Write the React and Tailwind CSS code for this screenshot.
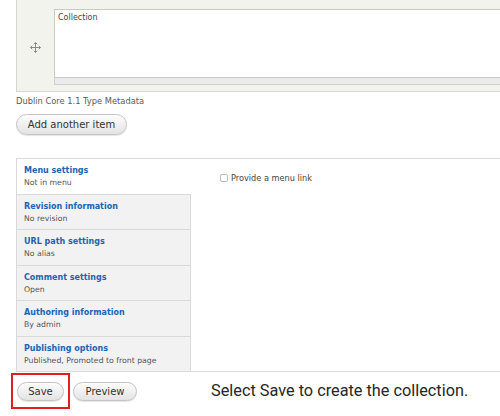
import React from "react";

const tabs = [
  ["Menu settings", "Not in menu"],
  ["Revision information", "No revision"],
  ["URL path settings", "No alias"],
  ["Comment settings", "Open"],
  ["Authoring information", "By admin"],
  ["Publishing options", "Published, Promoted to front page"],
];

function DragIcon() {
  return (
    <svg width="11" height="11" viewBox="0 0 11 11" fill="none" stroke="#8a8a8a" strokeWidth="1">
      <path d="M5.5 0.5v10M0.5 5.5h10" />
      <path d="M3.8 2.2L5.5 0.5L7.2 2.2M3.8 8.8L5.5 10.5L7.2 8.8M2.2 3.8L0.5 5.5L2.2 7.2M8.8 3.8L10.5 5.5L8.8 7.2" />
    </svg>
  );
}

export default function App() {
  return (
    <div
      className="relative w-[500px] h-[416px] overflow-hidden bg-white"
      style={{ fontFamily: '"DejaVu Sans", Verdana, sans-serif' }}
    >
      {/* multi-value table */}
      <div className="ml-4 w-[520px] h-[92px] flex border-l border-b border-[#d6d6d0] bg-[#f3f3ee]">
        <div className="w-[37px] flex items-center justify-center pt-[4px]">
          <DragIcon />
        </div>
        <div className="flex-1 pt-[9px]">
          <div className="h-[69px] bg-white border border-[#c8c8c8] px-[3px] pt-[2px] text-[8px] leading-[11px] text-[#444]">
            Collection
          </div>
          <div className="h-[7px] bg-[#ebebeb] border-x border-b border-[#cfcfcf]" />
        </div>
      </div>

      <div className="ml-4 mt-[3px] text-[8.3px] leading-[12px] text-[#595959]">
        Dublin Core 1.1 Type Metadata
      </div>

      <div className="ml-4 mt-[7px] flex">
        <div className="w-[111px] h-[21px] rounded-full border border-[#c4c4c4] bg-gradient-to-b from-[#fdfdfd] to-[#e3e3e3] shadow-[0_1px_1px_rgba(0,0,0,0.1)] flex items-center justify-center text-[10px] text-[#333]">
          Add another item
        </div>
      </div>

      {/* vertical tabs */}
      <div className="ml-4 mt-[23px] w-[520px] h-[214px] flex border-t border-l border-b border-[#d9d9d9]">
        <div className="w-[174px] flex flex-col">
          {tabs.map(([t, s], i) => (
            <div
              key={t}
              className={
                i === 0
                  ? "h-[35px] bg-white pl-[7px] pt-[6px]"
                  : "h-[35.6px] bg-[#f2f2f2] border-t border-r border-[#d9d9d9] pl-[7px] pt-[6px]"
              }
            >
              <div className="text-[8px] leading-[12px] font-bold text-[#1a64b4]">{t}</div>
              <div className="text-[7.75px] leading-[12px] text-[#555]">{s}</div>
            </div>
          ))}
        </div>
        <div className="flex-1 pl-[29px] pt-[14px]">
          <div className="flex items-center gap-[3px]">
            <div className="w-[8px] h-[8px] rounded-[2px] border border-[#bdbdbd] bg-white" />
            <span className="text-[8.2px] leading-[10px] text-[#444]">Provide a menu link</span>
          </div>
        </div>
      </div>

      {/* actions */}
      <div className="mt-[1px] flex items-center">
        <div className="ml-[11px] w-[59px] h-[36px] border-2 border-[#e0201e] flex items-center justify-center">
          <div className="w-[47px] h-[19px] rounded-full border border-[#c4c4c4] bg-gradient-to-b from-[#fdfdfd] to-[#e3e3e3] shadow-[0_1px_1px_rgba(0,0,0,0.1)] flex items-center justify-center text-[10px] text-[#333]">
            Save
          </div>
        </div>
        <div className="ml-[3px] w-[64px] h-[19px] rounded-full border border-[#c4c4c4] bg-gradient-to-b from-[#fdfdfd] to-[#e3e3e3] shadow-[0_1px_1px_rgba(0,0,0,0.1)] flex items-center justify-center text-[10px] text-[#333]">
          Preview
        </div>
        <div
          className="ml-[74px] text-[16.3px] text-[#262626]"
          style={{ fontFamily: 'Roboto, "Noto Sans", sans-serif' }}
        >
          Select Save to create the collection.
        </div>
      </div>
    </div>
  );
}
